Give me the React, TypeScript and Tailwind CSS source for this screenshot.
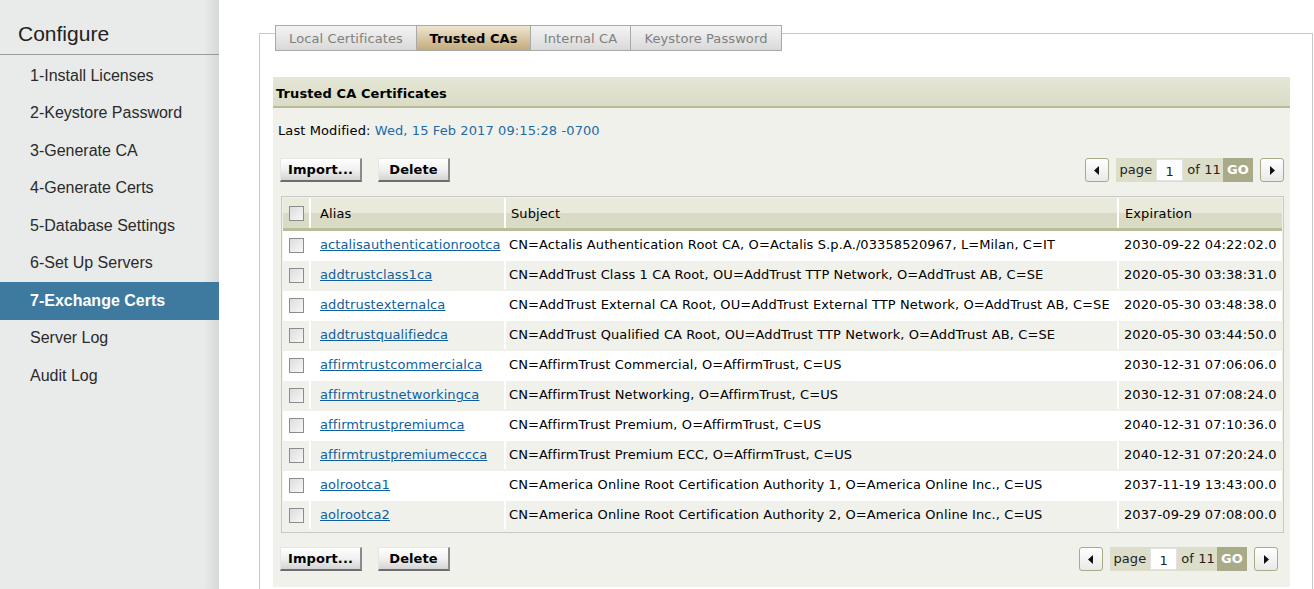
import React from "react";

const rows: [string, string, string][] = [
  ["actalisauthenticationrootca", "CN=Actalis Authentication Root CA, O=Actalis S.p.A./03358520967, L=Milan, C=IT", "2030-09-22 04:22:02.0"],
  ["addtrustclass1ca", "CN=AddTrust Class 1 CA Root, OU=AddTrust TTP Network, O=AddTrust AB, C=SE", "2020-05-30 03:38:31.0"],
  ["addtrustexternalca", "CN=AddTrust External CA Root, OU=AddTrust External TTP Network, O=AddTrust AB, C=SE", "2020-05-30 03:48:38.0"],
  ["addtrustqualifiedca", "CN=AddTrust Qualified CA Root, OU=AddTrust TTP Network, O=AddTrust AB, C=SE", "2020-05-30 03:44:50.0"],
  ["affirmtrustcommercialca", "CN=AffirmTrust Commercial, O=AffirmTrust, C=US", "2030-12-31 07:06:06.0"],
  ["affirmtrustnetworkingca", "CN=AffirmTrust Networking, O=AffirmTrust, C=US", "2030-12-31 07:08:24.0"],
  ["affirmtrustpremiumca", "CN=AffirmTrust Premium, O=AffirmTrust, C=US", "2040-12-31 07:10:36.0"],
  ["affirmtrustpremiumeccca", "CN=AffirmTrust Premium ECC, O=AffirmTrust, C=US", "2040-12-31 07:20:24.0"],
  ["aolrootca1", "CN=America Online Root Certification Authority 1, O=America Online Inc., C=US", "2037-11-19 13:43:00.0"],
  ["aolrootca2", "CN=America Online Root Certification Authority 2, O=America Online Inc., C=US", "2037-09-29 07:08:00.0"],
];

const menu = [
  "1-Install Licenses",
  "2-Keystore Password",
  "3-Generate CA",
  "4-Generate Certs",
  "5-Database Settings",
  "6-Set Up Servers",
  "7-Exchange Certs",
  "Server Log",
  "Audit Log",
];

function Check() {
  return (
    <span className="inline-block w-[15px] h-[15px] border border-[#8c8c8c] bg-gradient-to-br from-[#dcdcdc] to-[#f8f8f8] align-middle" />
  );
}

function Btn({ label, w }: { label: string; w: string }) {
  return (
    <button
      className={`${w} h-[24px] text-[13px] font-bold text-black border border-t-[#e6e6e6] border-l-[#e6e6e6] border-r-[#8a8a8a] border-b-[#6e6e6e] border-b-2 border-r-2 bg-gradient-to-b from-[#ffffff] via-[#f1f1f1] to-[#d4d4d4] leading-none`}
    >
      {label}
    </button>
  );
}

function Arrow({ dir }: { dir: "l" | "r" }) {
  return (
    <div className="w-[24px] h-[24px] rounded-[3px] border border-[#a8ab86] bg-gradient-to-b from-white to-[#e9e9e9] flex items-center justify-center">
      <svg width="6" height="9" viewBox="0 0 6 9">
        {dir === "l" ? <path d="M5 0 L0 4.5 L5 9 Z" fill="#111" /> : <path d="M1 0 L6 4.5 L1 9 Z" fill="#111" />}
      </svg>
    </div>
  );
}

function Pager() {
  return (
    <div className="flex items-center gap-[7px]">
      <Arrow dir="l" />
      <div className="flex items-center h-[24px] bg-[#dcdec9] text-[13px] text-[#222]">
        <span className="pl-[3px] pr-[4px]">page</span>
        <span className="w-[27px] h-[22px] bg-white border border-[#e2e2e2] flex items-center justify-center pt-[3px]">1</span>
        <span className="pl-[4px] pr-[2px]">of 11</span>
        <span className="h-[24px] w-[30px] bg-[#a8aa88] text-white font-bold flex items-center justify-center">GO</span>
      </div>
      <Arrow dir="r" />
    </div>
  );
}

export default function App() {
  const verdana = { fontFamily: '"DejaVu Sans", Verdana, sans-serif', letterSpacing: "0.1px" } as const;
  return (
    <div className="flex w-[1314px] h-[589px] overflow-hidden bg-white">
      <aside
        className="w-[219px] shrink-0 bg-[#e9eaea] bg-gradient-to-r from-[#e9eaea] from-[93%] to-[#d6d7d7] text-[#2a2a2a]"
        style={{ fontFamily: '"Liberation Sans", Arial, sans-serif' }}
      >
        <div className="h-[55px] border-b border-[#9a9a9a] pl-[18px] pt-[21px] text-[21px] leading-[26px] text-[#222]">
          Configure
        </div>
        <div className="pt-[2px]">
          {menu.map((m) => {
            const active = m.startsWith("7-");
            return (
              <div
                key={m}
                className={`h-[37.5px] flex items-center pl-[30px] text-[16px] ${
                  active ? "bg-[#3e7aa0] text-white font-bold" : ""
                }`}
              >
                {m}
              </div>
            );
          })}
        </div>
      </aside>

      <main className="flex-1 pl-[40px] pt-[33px]" style={verdana}>
        <div className="w-[1054px] h-[600px] border-t border-l border-r border-[#c9c9c9]">
          <div className="flex ml-[15px] -mt-[9px] text-[13px]">
            {[
              ["Local Certificates", "w-[142px]"],
              ["Trusted CAs", "w-[115px]"],
              ["Internal CA", "w-[101px]"],
              ["Keystore Password", "w-[152px]"],
            ].map(([t, w]) => {
              const active = t === "Trusted CAs";
              return (
                <div
                  key={t}
                  className={`${w} h-[26px] flex items-center justify-center pt-[2px] border border-[#a9a9a9] -ml-px first:ml-0 ${
                    active
                      ? "bg-gradient-to-b from-[#efe6cf] to-[#c3ab7b] text-black font-bold"
                      : "bg-gradient-to-b from-[#f4f4f4] to-[#d9d9d9] text-[#7f7f7f]"
                  }`}
                >
                  {t}
                </div>
              );
            })}
          </div>

          <div className="ml-[13px] mt-[26px] w-[1017px] bg-[#f1f1ec] pb-[16px] text-[13px] text-black">
            <div className="h-[31px] flex items-center px-[3px] pt-[4px] font-bold bg-gradient-to-b from-[#e5e7d6] to-[#dadcc6] border-b-2 border-[#b8bb98]">
              Trusted CA Certificates
            </div>
            <div className="pl-[5px] pt-[13px] h-[50px]">
              Last Modified: <span className="text-[#1d6aa5]">Wed, 15 Feb 2017 09:15:28 -0700</span>
            </div>
            <div className="flex items-center justify-between pl-[7px] pr-[6px]">
              <div className="flex gap-[16px]">
                <Btn label="Import..." w="w-[82px]" />
                <Btn label="Delete" w="w-[72px]" />
              </div>
              <Pager />
            </div>

            <div className="ml-[8px] mt-[14px] w-[1003px] border border-[#c8c8c8] p-px">
              <div className="flex h-[33px] bg-gradient-to-b from-[#e9eadc] from-50% to-[#d9dbc5] to-50% border-b-[3px] border-[#babd9a]">
                <div className="w-[28px] flex items-center justify-center border-r-2 border-white">
                  <Check />
                </div>
                <div className="w-[195px] flex items-center px-[9px] pt-[2px] border-r-2 border-white">Alias</div>
                <div className="w-[613px] flex items-center px-[5px] pt-[2px] border-r-2 border-white">Subject</div>
                <div className="flex-1 flex items-center px-[6px] pt-[2px]">Expiration</div>
              </div>
              {rows.map(([a, s, e], i) => (
                <div key={a} className={`flex h-[30px] pb-[2px] ${i % 2 === 0 ? "bg-white" : "bg-[#f1f1ec]"}`}>
                  <div className="w-[28px] flex items-center justify-center border-r-2 border-white">
                    <Check />
                  </div>
                  <div className="w-[195px] flex items-center pl-[9px] pr-[2px] border-r-2 border-white">
                    <a className="text-[#0f5f9e] underline" href="#">
                      {a}
                    </a>
                  </div>
                  <div className="w-[613px] flex items-center px-[3px] border-r-2 border-white whitespace-nowrap overflow-hidden">
                    {s}
                  </div>
                  <div className="flex-1 flex items-center px-[5px] whitespace-nowrap">{e}</div>
                </div>
              ))}
            </div>

            <div className="flex items-center justify-between pl-[7px] pr-[12px] mt-[14px]">
              <div className="flex gap-[16px]">
                <Btn label="Import..." w="w-[82px]" />
                <Btn label="Delete" w="w-[72px]" />
              </div>
              <Pager />
            </div>
          </div>
        </div>
      </main>
    </div>
  );
}
